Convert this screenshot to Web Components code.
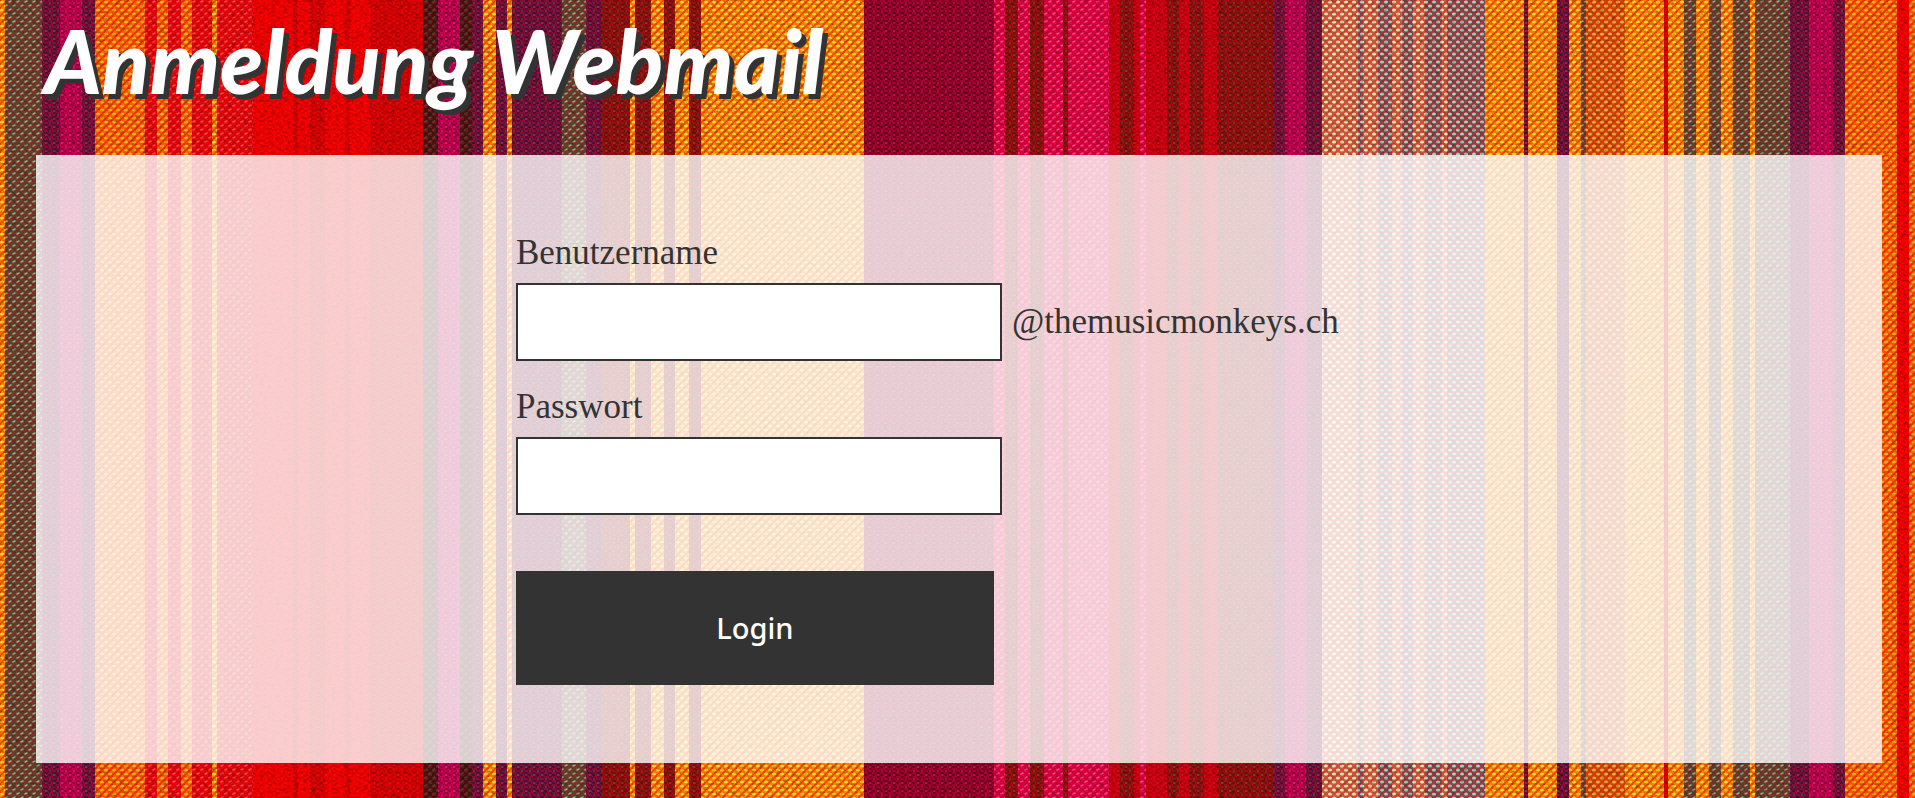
<!DOCTYPE html>
<html lang="de">
<head>
<meta charset="utf-8">
<meta name="viewport" content="width=device-width, initial-scale=1">
<title>Anmeldung Webmail</title>
<style>
  body {
    margin: 0;
    color: #333;
    font-family: "Palatino", "Palatino Linotype", "Liberation Serif", serif;
    font-size: 35px;
    line-height: 40px;
  }
</style>
</head>
<body>
<webmail-page>
  <page-title slot="header">Anmeldung Webmail</page-title>
  <login-panel>
    <text-field name="user" autocomplete="username" label="Benutzername">@themusicmonkeys.ch</text-field>
    <text-field name="password" type="password" autocomplete="current-password" label="Passwort"></text-field>
    <submit-button slot="actions">Login</submit-button>
  </login-panel>
</webmail-page>

<script>
function html(markup) {
  const template = document.createElement('template');
  template.innerHTML = markup;
  return template;
}

function attach(host, template) {
  const root = host.attachShadow({ mode: 'open' });
  root.appendChild(document.importNode(template.content, true));
  return root;
}

// Yarns: ground colour, weft shade, thread highlight and kind of weave
const yarns = {
  green: ['#6e3a28', '#a3202c', '#62c890', 'twill'],
  purple: ['#4c1438', '#a5082e', '#6a558a', 'fine'],
  magenta: ['#9c0048', '#d9004a', '#f0308f', 'fine'],
  yellow: ['#fb7a00', '#ee3a00', '#ffdc30', 'dots'],
  orange: ['#fb5c00', '#f02600', '#ffb41c', 'dots'],
  redpink: ['#e00408', '#ee0808', '#f94b50', 'twill'],
  red: ['#e80000', '#fb0000', '#f01515', 'fine'],
  deepred: ['#c40003', '#ea0000', '#d91c20', 'fine'],
  black: ['#451412', '#7c1018', '#5e4034', 'twill'],
  brown: ['#6c160c', '#b80612', '#7a5c2c', 'fine'],
  burgundy: ['#740024', '#b8002c', '#a33569', 'fine'],
  pink: ['#d40038', '#ee0038', '#f84999', 'twill'],
  crimson: ['#bb000c', '#df0015', '#cb1c2a', 'fine'],
  cream: ['#cc5a40', '#dc4535', '#f4ecb4', 'dots'],
  teal: ['#8f4448', '#b4303c', '#9adcc6', 'dots'],
  rust: ['#d04a08', '#e42e04', '#f0b040', 'dots']
};

// Stripes from left to right: [start, yarn]
const stripes = [
  [0, 'yellow'], [5, 'green'], [42, 'purple'], [60, 'magenta'], [82, 'purple'],
  [95, 'orange'], [145, 'redpink'], [157, 'orange'], [168, 'redpink'],
  [181, 'orange'], [192, 'redpink'], [212, 'yellow'], [217, 'redpink'],
  [253, 'red'], [293, 'deepred'], [298, 'red'], [310, 'deepred'], [325, 'red'],
  [345, 'deepred'], [350, 'red'], [370, 'deepred'], [423, 'black'],
  [438, 'magenta'], [460, 'black'], [472, 'purple'], [483, 'yellow'],
  [496, 'purple'], [507, 'yellow'], [512, 'purple'], [562, 'green'],
  [586, 'purple'], [602, 'brown'], [630, 'yellow'], [635, 'brown'],
  [651, 'yellow'], [664, 'brown'], [675, 'yellow'], [689, 'brown'],
  [701, 'yellow'], [864, 'burgundy'], [994, 'pink'], [1005, 'brown'],
  [1018, 'pink'], [1030, 'brown'], [1044, 'pink'], [1063, 'brown'],
  [1068, 'pink'], [1109, 'crimson'], [1120, 'brown'], [1134, 'crimson'],
  [1140, 'pink'], [1146, 'crimson'], [1167, 'brown'], [1179, 'crimson'],
  [1190, 'brown'], [1204, 'crimson'], [1217, 'brown'], [1273, 'purple'],
  [1285, 'magenta'], [1306, 'purple'], [1322, 'cream'], [1358, 'teal'],
  [1363, 'cream'], [1378, 'teal'], [1392, 'cream'], [1402, 'teal'],
  [1413, 'cream'], [1425, 'teal'], [1442, 'cream'], [1447, 'teal'],
  [1485, 'yellow'], [1524, 'purple'], [1528, 'yellow'], [1557, 'purple'],
  [1569, 'yellow'], [1581, 'green'], [1586, 'rust'], [1625, 'yellow'],
  [1664, 'deepred'], [1668, 'yellow'], [1684, 'green'], [1696, 'yellow'],
  [1709, 'green'], [1721, 'yellow'], [1733, 'green'], [1750, 'yellow'],
  [1755, 'green'], [1790, 'purple'], [1809, 'magenta'], [1833, 'purple'],
  [1845, 'orange'], [1897, 'red'], [1909, 'orange'], [1920, 'yellow']
];

const weaves = {
  dots: (weft, thread) => `
    <path d="M0 0L8 8M8 0L0 8" stroke="${weft}" stroke-width="1.2"/>
    <g fill="${thread}">
      <ellipse cx="2" cy="2" rx="2" ry="1.6"/>
      <ellipse cx="6" cy="6" rx="2" ry="1.6"/>
    </g>`,
  twill: (weft, thread) => `
    <path d="M0 3H4M4 7H8" stroke="${weft}" stroke-width="2"/>
    <path d="M1 2L3 1M5 6L7 5" stroke="${thread}" stroke-width="1.6" stroke-linecap="round"/>`,
  fine: (weft, thread) => `
    <path d="M0 1H5M4 3H8M0 5H4M3 7H8" stroke="${weft}" stroke-width="1.3"/>
    <path d="M1 3H3M5 7H7" stroke="${thread}" stroke-width="1"/>`
};

function drawPattern(name) {
  const [ground, weft, thread, weave] = yarns[name];
  return `
    <pattern id="${name}" width="8" height="8" patternUnits="userSpaceOnUse">
      <rect width="8" height="8" fill="${ground}"/>
      ${weaves[weave](weft, thread)}
    </pattern>`;
}

function drawStripe([x, name], i) {
  const end = i + 1 < stripes.length ? stripes[i + 1][0] : 1930;
  return `<rect x="${x}" width="${end - x}" height="800" fill="url(#${name})"/>`;
}

const clothTemplate = html(/* html */ `
  <style>
    :host {
      display: block;
      overflow: hidden;
    }

    svg {
      display: block;
      width: 100%;
      height: 100%;
    }
  </style>
  <svg viewBox="0 0 1915 798" preserveAspectRatio="xMidYMid slice" aria-hidden="true">
    <defs>
      ${Object.keys(yarns).map(drawPattern).join('')}
      <filter id="slub" x="0" y="0" width="100%" height="100%">
        <feTurbulence type="fractalNoise" baseFrequency="0.25 0.35" numOctaves="2" seed="4"/>
        <feColorMatrix values="0 0 0 0 0  0 0 0 0 0  0 0 0 0 0  0.8 0 0 0 -0.38"/>
      </filter>
    </defs>
    ${stripes.map(drawStripe).join('')}
    <rect width="1915" height="798" filter="url(#slub)"/>
  </svg>
`);

class WovenCloth extends HTMLElement {
  constructor() {
    super();
    attach(this, clothTemplate);
  }
}

const pageTemplate = html(/* html */ `
  <style>
    :host {
      display: block;
      position: relative;
      min-height: 100vh;
      box-sizing: border-box;
      padding: 0 33px 35px 36px;
    }

    woven-cloth {
      position: absolute;
      inset: 0;
      z-index: -1;
    }
  </style>
  <woven-cloth></woven-cloth>
  <header><slot name="header"></slot></header>
  <main><slot></slot></main>
`);

class WebmailPage extends HTMLElement {
  constructor() {
    super();
    attach(this, pageTemplate);
  }
}

const titleTemplate = html(/* html */ `
  <style>
    :host {
      display: block;
      padding: 10px 8px 45px;
    }

    h1 {
      margin: 0;
      color: #fff;
      font: italic 900 88px/100px "Lato", sans-serif;
      text-shadow: 5px 5px 0 #333;
    }
  </style>
  <h1><slot></slot></h1>
`);

class PageTitle extends HTMLElement {
  constructor() {
    super();
    attach(this, titleTemplate);
  }
}

const panelTemplate = html(/* html */ `
  <style>
    :host {
      display: block;
      background: rgba(255, 255, 255, 0.8);
    }

    form {
      display: flex;
      flex-direction: column;
      gap: 56px;
      padding: 78px 0 78px 26%;
    }

    .fields {
      display: flex;
      flex-direction: column;
      gap: 26px;
    }
  </style>
  <form>
    <div class="fields"><slot></slot></div>
    <slot name="actions"></slot>
  </form>
`);

class LoginPanel extends HTMLElement {
  constructor() {
    super();
    const root = attach(this, panelTemplate);
    const form = root.querySelector('form');

    form.addEventListener('submit', ev => ev.preventDefault());
    this.addEventListener('login', () => form.requestSubmit());
  }
}

const fieldTemplate = html(/* html */ `
  <style>
    :host {
      display: flex;
      flex-direction: column;
      align-items: flex-start;
      gap: 10px;
    }

    .row {
      display: flex;
      flex-wrap: wrap;
      align-items: center;
      gap: 10px;
    }

    input {
      box-sizing: border-box;
      width: 486px;
      max-width: 100%;
      height: 78px;
      margin: 0;
      padding: 0 20px;
      border: 2px solid #333;
      border-radius: 0;
      background: #fff;
      color: inherit;
      font: inherit;
    }
  </style>
  <label for="input"></label>
  <div class="row">
    <input id="input">
    <slot></slot>
  </div>
`);

class TextField extends HTMLElement {
  constructor() {
    super();
    attach(this, fieldTemplate);
  }

  connectedCallback() {
    const input = this.shadowRoot.querySelector('input');
    this.shadowRoot.querySelector('label').textContent = this.getAttribute('label');
    input.type = this.getAttribute('type') || 'text';
    input.name = this.getAttribute('name');
    input.autocomplete = this.getAttribute('autocomplete') || 'off';
  }
}

const buttonTemplate = html(/* html */ `
  <style>
    :host {
      display: block;
    }

    button {
      display: block;
      width: 478px;
      max-width: 100%;
      height: 114px;
      margin: 0;
      padding: 0;
      border: 0;
      background: #333;
      color: #fff;
      font: 500 29px/40px "Noto Sans", sans-serif;
      cursor: pointer;
    }
  </style>
  <button type="button"><slot></slot></button>
`);

class SubmitButton extends HTMLElement {
  constructor() {
    super();
    const root = attach(this, buttonTemplate);
    root.querySelector('button').addEventListener('click', () => {
      this.dispatchEvent(new CustomEvent('login', { bubbles: true }));
    });
  }
}

customElements.define('woven-cloth', WovenCloth);
customElements.define('webmail-page', WebmailPage);
customElements.define('page-title', PageTitle);
customElements.define('login-panel', LoginPanel);
customElements.define('text-field', TextField);
customElements.define('submit-button', SubmitButton);
</script>
</body>
</html>
